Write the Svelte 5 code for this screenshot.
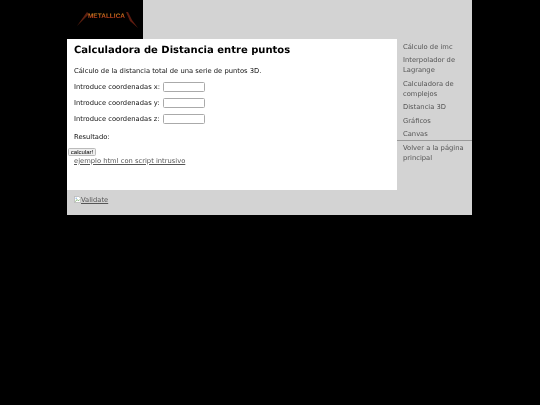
<script>
  const coords = ['x', 'y', 'z'];
  const links = [
    'Cálculo de imc',
    'Interpolador de Lagrange',
    'Calculadora de complejos',
    'Distancia 3D',
    'Gráficos',
    'Canvas'
  ];
</script>

<div class="page">
  <header class="header">
    <div class="logo">
      <svg viewBox="0 0 76 39" width="76" height="39" aria-label="Metallica">
        <defs>
          <linearGradient id="fire" x1="0" y1="0" x2="0" y2="1">
            <stop offset="0" stop-color="#d89020" />
            <stop offset="0.6" stop-color="#b8401a" />
            <stop offset="1" stop-color="#701a0a" />
          </linearGradient>
        </defs>
        <polygon points="20,12 22,14 16,20 10,26 15,19" fill="#5e2010" />
        <polygon points="59,12 61,12 65,20 71,28 63,21" fill="#5e1c10" />
        <text x="39.5" y="18" text-anchor="middle" class="logotext" fill="url(#fire)">METALLICA</text>
      </svg>
    </div>
    <div class="band"></div>
  </header>

  <div class="body">
    <main class="content">
      <h1>Calculadora de Distancia entre puntos</h1>
      <p>Cálculo de la distancia total de una serie de puntos 3D.</p>
      {#each coords as c}
        <p class="field">Introduce coordenadas {c}: <input type="text" /></p>
      {/each}
      <p class="result">Resultado:</p>
      <button type="button">calcular!</button>
      <a class="example" href="#top">ejemplo html con script intrusivo</a>
    </main>
    <nav class="side">
      <ul>
        {#each links as l}
          <li><a href="#top">{l}</a></li>
        {/each}
      </ul>
      <a class="back" href="#top">Volver a la página principal</a>
    </nav>
  </div>

  <footer class="footer">
    <a href="#top">
      <svg class="broken" viewBox="0 0 8 8" width="7" height="7" aria-hidden="true">
        <path d="M0.5 0.5H5.5L7.5 2.5V7.5H0.5Z" fill="#fff" stroke="#999" stroke-width="0.6" />
        <path d="M1.5 6.5L3.5 4L5 5.5L6.5 4" fill="none" stroke="#5a9a4a" stroke-width="0.8" />
        <circle cx="2.5" cy="2.5" r="0.8" fill="#7aa7e0" />
      </svg>Validate</a>
  </footer>
</div>

<style>
  :global(html), :global(body) {
    margin: 0;
    background: #000;
  }
  .page {
    width: 405px;
    margin-left: 67px;
    font-family: "DejaVu Sans", sans-serif;
    font-size: 6.75px;
    line-height: 10px;
    color: #111;
    text-rendering: geometricPrecision;
    will-change: transform;
    filter: blur(0.4px);
  }
  .header {
    display: flex;
    height: 39px;
  }
  .logo {
    width: 76px;
    background: #000;
  }
  .logo svg {
    display: block;
  }
  .logotext {
    font-family: "Liberation Sans", sans-serif;
    font-size: 6.5px;
    font-weight: 700;
  }
  .band {
    flex: 1;
    background: #d3d3d3;
  }
  .body {
    display: flex;
    height: 151px;
  }
  .content {
    width: 330px;
    background: #fff;
  }
  h1 {
    font-size: 10px;
    line-height: 14px;
    font-weight: 700;
    color: #000;
    margin: 5px 7px 8px 7px;
  }
  p {
    margin: 0 7px 6px 7px;
  }
  .field {
    display: flex;
    align-items: center;
    height: 10px;
    white-space: pre;
  }
  .result {
    padding-top: 1.5px;
  }
  input {
    width: 42px;
    height: 9.5px;
    box-sizing: border-box;
    margin: 0 0 0 1px;
    padding: 0;
    border: 1px solid #aaa;
    border-radius: 1.5px;
    background: #fff;
  }
  button {
    display: block;
    height: 8px;
    width: 28px;
    padding: 0;
    margin: 2px 0 0 1px;
    border: 1px solid #bbb;
    border-radius: 1.5px;
    background: #efefef;
    font-family: "Liberation Sans", sans-serif;
    font-size: 6px;
    line-height: 6px;
    color: #000;
  }
  a {
    color: #555;
  }
  .example {
    display: block;
    margin-left: 7px;
  }
  .side {
    flex: 1;
    background: #d3d3d3;
  }
  ul {
    list-style: none;
    margin: 0;
    padding: 2.5px 0 0 0;
    border-bottom: 1px solid #999;
  }
  li {
    padding: 0 6px 3.5px 6px;
  }
  li:last-child {
    padding-bottom: 1px;
  }
  .side a {
    display: block;
    text-decoration: none;
    line-height: 10px;
  }
  .back {
    padding: 2px 6px;
  }
  .footer {
    height: 25px;
    box-sizing: border-box;
    background: #d3d3d3;
    padding: 4.5px 7px 0 7px;
  }
  .broken {
    vertical-align: -1px;
  }
</style>
